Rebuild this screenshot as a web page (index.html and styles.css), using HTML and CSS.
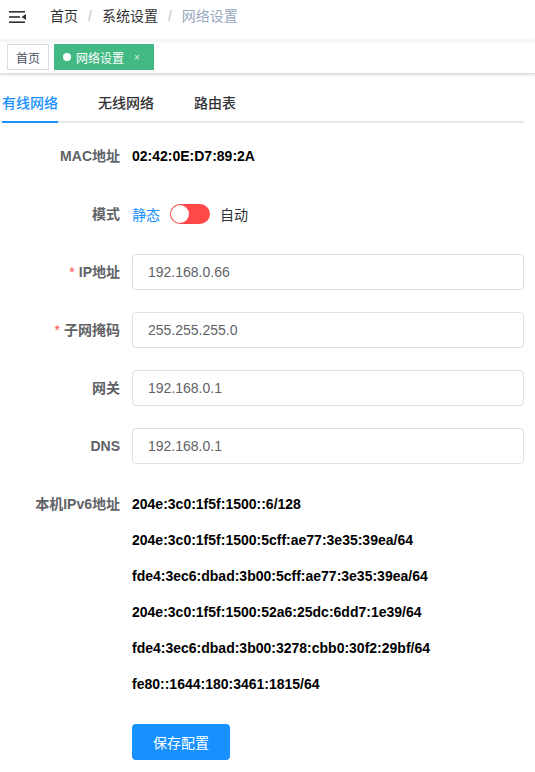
FILE: index.html
```html
<!DOCTYPE html>
<html lang="zh-CN">
  <head>
    <meta charset="UTF-8">
    <meta name="viewport" content="width=device-width, initial-scale=1.0">
    <title>网络设置</title>
    <link rel="stylesheet" href="styles.css">
  </head>
  <body>
    <div class="main-container">
      <div class="navbar">
        <div class="hamburger">
          <svg width="17" height="12" viewBox="0 0 17 12">
            <rect x="0" y="0" width="16" height="1.6" fill="#303133"/>
            <rect x="0" y="5.2" width="11" height="1.6" fill="#303133"/>
            <rect x="0" y="10.4" width="16" height="1.6" fill="#303133"/>
            <path d="M17 3 L12.5 6 L17 9 Z" fill="#303133"/>
          </svg>
        </div>
        <div class="breadcrumb">
          <span class="crumb">首页</span>
          <span class="sep">/</span>
          <span class="crumb">系统设置</span>
          <span class="sep">/</span>
          <span class="crumb current">网络设置</span>
        </div>
      </div>

      <div class="tags-view">
        <span class="tag">首页</span>
        <span class="tag active"><i class="dot"></i>网络设置<span class="close">×</span></span>
      </div>

      <div class="app-container">
        <div class="tabs">
          <div class="tab active"><span>有线网络</span></div>
          <div class="tab"><span>无线网络</span></div>
          <div class="tab"><span>路由表</span></div>
        </div>

        <form class="net-form">
          <div class="form-item">
            <label class="form-label">MAC地址</label>
            <div class="form-content"><span class="value">02:42:0E:D7:89:2A</span></div>
          </div>

          <div class="form-item">
            <label class="form-label">模式</label>
            <div class="form-content">
              <span class="switch-label on">静态</span>
              <span class="switch"><span class="knob"></span></span>
              <span class="switch-label">自动</span>
            </div>
          </div>

          <div class="form-item">
            <label class="form-label required">IP地址</label>
            <div class="form-content"><input class="input" type="text" value="192.168.0.66"></div>
          </div>

          <div class="form-item">
            <label class="form-label required">子网掩码</label>
            <div class="form-content"><input class="input" type="text" value="255.255.255.0"></div>
          </div>

          <div class="form-item">
            <label class="form-label">网关</label>
            <div class="form-content"><input class="input" type="text" value="192.168.0.1"></div>
          </div>

          <div class="form-item">
            <label class="form-label">DNS</label>
            <div class="form-content"><input class="input" type="text" value="192.168.0.1"></div>
          </div>

          <div class="form-item">
            <label class="form-label">本机IPv6地址</label>
            <div class="form-content">
              <div class="value">204e:3c0:1f5f:1500::6/128</div>
              <div class="value">204e:3c0:1f5f:1500:5cff:ae77:3e35:39ea/64</div>
              <div class="value">fde4:3ec6:dbad:3b00:5cff:ae77:3e35:39ea/64</div>
              <div class="value">204e:3c0:1f5f:1500:52a6:25dc:6dd7:1e39/64</div>
              <div class="value">fde4:3ec6:dbad:3b00:3278:cbb0:30f2:29bf/64</div>
              <div class="value">fe80::1644:180:3461:1815/64</div>
            </div>
          </div>

          <div class="form-item">
            <div class="form-label"></div>
            <div class="form-content"><button type="button" class="btn-primary">保存配置</button></div>
          </div>
        </form>
      </div>
    </div>
  </body>
</html>
```

FILE: styles.css
```css
:root {
  --primary-color: #1890ff;
  --tag-green: #42b983;
  --danger-color: #ff4949;
  --text-main: #303133;
  --text-regular: #606266;
  --text-muted: #97a8be;
  --border-color: #dcdfe6;
  --line-color: #e4e7ed;
}

* {
  margin: 0;
  padding: 0;
  box-sizing: border-box;
}

body {
  font-family: "Helvetica Neue", Helvetica, "Liberation Sans", "Noto Sans CJK SC", sans-serif;
  font-size: 14px;
  color: var(--text-main);
  background: #fff;
  -webkit-font-smoothing: antialiased;
}

/* top bar */
.navbar {
  height: 40px;
  display: flex;
  align-items: flex-start;
  padding-top: 10px;
  position: relative;
  z-index: 2;
  box-shadow: 0 1px 4px rgba(0, 21, 41, 0.08);
}

.hamburger {
  width: 50px;
  padding-left: 9px;
  padding-top: 1px;
  line-height: 0;
}

.breadcrumb {
  display: flex;
  line-height: 12px;
  font-size: 14px;
  white-space: nowrap;
}

.crumb {
  color: var(--text-main);
}

.crumb.current {
  color: var(--text-muted);
}

.sep {
  color: #c0c4cc;
  margin: 0 10px;
}

/* visited tags */
.tags-view {
  height: 34px;
  display: flex;
  align-items: flex-start;
  padding: 4px 7px 0;
  border-bottom: 1px solid #d8dce5;
  box-shadow: 0 1px 3px 0 rgba(0, 0, 0, 0.12), 0 0 3px 0 rgba(0, 0, 0, 0.04);
}

.tag {
  display: inline-flex;
  align-items: center;
  height: 26px;
  padding: 0 8px;
  font-size: 12px;
  color: #495060;
  border: 1px solid #d8dce5;
  background: #fff;
  margin-right: 5px;
}

.tag.active {
  background: var(--tag-green);
  border-color: var(--tag-green);
  color: #fff;
  padding: 0 10px 0 8px;
}

.dot {
  width: 8px;
  height: 8px;
  border-radius: 50%;
  background: #fff;
  margin-right: 5px;
}

.close {
  font-size: 10px;
  margin-left: 10px;
  margin-right: 3px;
  opacity: 0.8;
}

/* page body */
.app-container {
  padding: 9px 11px 0 2px;
}

.tabs {
  display: flex;
  height: 40px;
  border-bottom: 2px solid var(--line-color);
  margin-bottom: 15px;
}

.tab {
  height: 40px;
  line-height: 40px;
  padding: 0 20px;
  font-weight: 500;
  color: var(--text-main);
}

.tab span {
  display: inline-block;
  height: 40px;
}

.tab:first-child {
  padding-left: 0;
}

.tab.active {
  color: var(--primary-color);
}

.tab.active span {
  border-bottom: 2px solid var(--primary-color);
}

.net-form {
  display: flex;
  flex-direction: column;
  gap: 22px;
}

.form-item {
  display: flex;
}

.form-label {
  width: 130px;
  flex-shrink: 0;
  padding-right: 12px;
  text-align: right;
  line-height: 36px;
  font-weight: 700;
  color: var(--text-regular);
}

.form-label.required::before {
  content: "*";
  color: #ff4949;
  margin-right: 4px;
  font-weight: 400;
}

.form-content {
  flex: 1;
  display: flex;
  flex-direction: column;
  min-height: 36px;
}

.value {
  line-height: 36px;
  font-weight: 700;
  color: #000;
}

.form-item:nth-child(2) .form-content {
  flex-direction: row;
  align-items: center;
}

.switch-label {
  color: var(--text-main);
}

.switch-label.on {
  color: var(--primary-color);
}

.switch {
  position: relative;
  width: 40px;
  height: 20px;
  border-radius: 10px;
  background: var(--danger-color);
  margin: 0 10px;
}

.knob {
  position: absolute;
  top: 1px;
  left: 1px;
  width: 18px;
  height: 18px;
  border-radius: 50%;
  background: #fff;
}

.input {
  width: 100%;
  height: 36px;
  padding: 0 15px;
  border: 1px solid var(--border-color);
  border-radius: 4px;
  font-family: inherit;
  font-size: 14px;
  color: var(--text-regular);
  outline: none;
}

.btn-primary {
  align-self: flex-start;
  height: 36px;
  padding: 0 21px;
  border: none;
  border-radius: 4px;
  background: var(--primary-color);
  color: #fff;
  font-family: inherit;
  font-size: 14px;
  cursor: pointer;
}
```
